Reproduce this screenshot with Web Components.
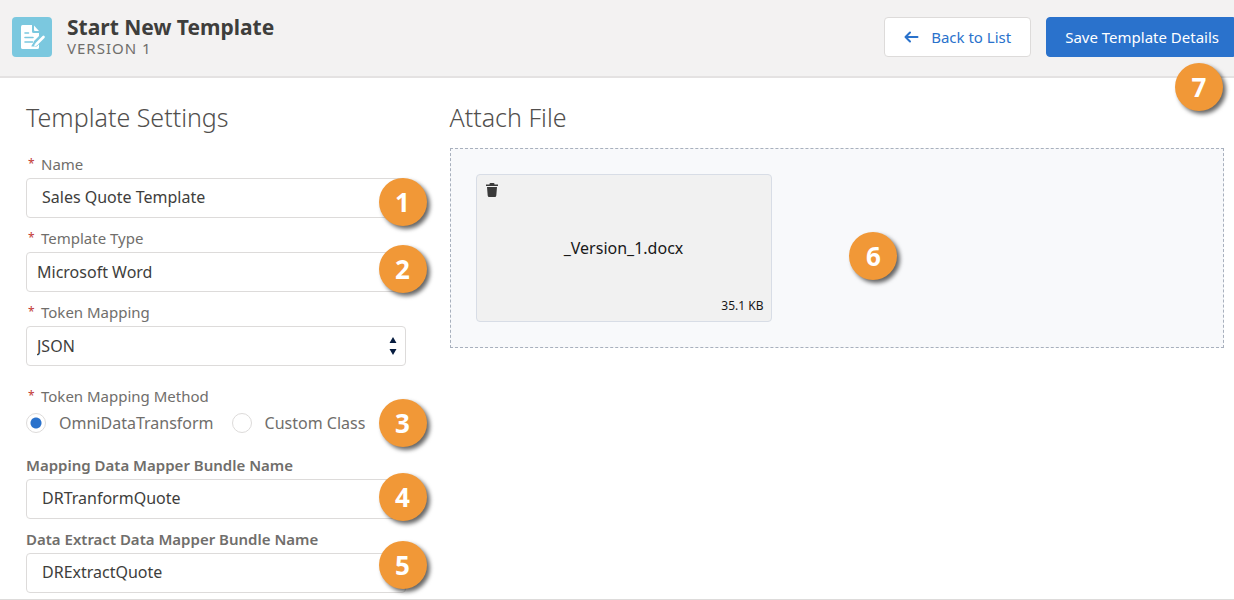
<!DOCTYPE html>
<html lang="en">
<head>
<meta charset="utf-8">
<meta name="viewport" content="width=device-width, initial-scale=1">
<title>Start New Template</title>
<style>
  body { margin: 0; background: #fff; color: #3e3e3c; font: 16px/20px "Noto Sans", "Open Sans", sans-serif; }
</style>
</head>
<body>
<template-page></template-page>

<template id="step-badge">
  <style>
    :host { position: absolute; z-index: 2; display: flex; align-items: center; justify-content: center;
      width: 48px; height: 48px; border-radius: 50%; background: #f19837; color: #fff;
      font-size: 26px; line-height: 32px; font-weight: 700; box-shadow: 3px 3px 4px rgba(0, 0, 0, .6); }
  </style>
  <slot></slot>
</template>

<template id="page-header">
  <style>
    :host { position: relative; display: flex; align-items: center; justify-content: space-between;
      padding: 16px 0 18px 12px; background: #f3f2f2; border-bottom: 2px solid #e4e2e2; }
    .title { display: flex; align-items: center; gap: 15px; }
    .icon { width: 40px; height: 40px; flex: none; }
    h1 { margin: 0; font-size: 21px; line-height: 22px; font-weight: 700; }
    p { margin: 0; font-size: 15px; line-height: 20px; color: #706e6b; letter-spacing: 1px; }
    .actions { display: flex; gap: 15px; }
    button { display: flex; align-items: center; gap: 12px; height: 40px; padding: 0 19px; box-sizing: border-box;
      border: 1px solid #dddbda; border-radius: 4px; background: #fff; color: #2a72cc; font: inherit; font-size: 15px; white-space: nowrap; }
    button.primary { background: #2a72cc; border-color: #2a72cc; color: #fff; padding: 0 14px 0 18px; border-radius: 4px 0 0 4px; }
    step-badge { right: 11px; bottom: -35px; }
  </style>
  <div class="title">
    <svg class="icon" viewBox="0 0 40 40" aria-hidden="true">
      <rect width="40" height="40" rx="4" fill="#7bc8df"/>
      <path fill="#fff" d="M10.500 8H20v6.500q0 1.500 1.500 1.500H27v3l-5 5-1 4 1 1 4-1 1-1v3q0 2-2 2H11q-2 0-2-2V10q0-2 1.500-2z"/>
      <path fill="#fff" d="M22 8.500 27 14h-4q-1 0-1-1z"/>
      <path stroke="#7bc8df" stroke-width="1.600" stroke-linecap="round" d="M13 16h3.500M13 20.500h8M13 25h7.500"/>
      <path d="m31.500 19-7.500 7.500-2 3" stroke="#7bc8df" stroke-width="5" stroke-linecap="round" fill="none"/>
      <path d="m31.500 20-7 7" stroke="#fff" stroke-width="2.600" stroke-linecap="round"/>
      <path d="m23 26.500 2 2-3 1z" fill="#fff"/>
      <path d="M9 29.500h18V30q0 2-2 2H11q-2 0-2-2z" fill="#fff"/>
    </svg>
    <div>
      <h1>Start New Template</h1>
      <p>VERSION 1</p>
    </div>
  </div>
  <div class="actions">
    <button type="button">
      <svg width="15" height="14" viewBox="0 0 15 14" fill="none" stroke="currentColor" stroke-width="2" stroke-linecap="round" stroke-linejoin="round" aria-hidden="true"><path d="M6 2.500 1.500 7 6 11.500M2 7h11.500"/></svg>
      Back to List
    </button>
    <button type="button" class="primary">Save Template Details</button>
  </div>
  <step-badge>7</step-badge>
</template>

<template id="text-field">
  <style>
    :host { position: relative; display: flex; flex-direction: column; gap: 4px; }
    label { display: flex; font-size: 15px; line-height: 20px; color: #706e6b; }
    :host(:not([required])) label { font-weight: 600; }
    .star { width: 15px; box-sizing: border-box; padding-left: 2px; font-size: 12px; color: #c23934; }
    :host(:not([required])) .star { display: none; }
    .box { position: relative; display: flex; align-items: center; }
    input, select { width: 100%; height: 40px; box-sizing: border-box; margin: 0; padding: 0 15px 2px; appearance: none;
      border: 1px solid #dddbda; border-radius: 4px; background: #fff; color: #3e3e3c; font: inherit; }
    select { padding: 0 10px; }
    .arrows { position: absolute; right: 9px; pointer-events: none; }
    ::slotted(step-badge) { right: -21px; bottom: calc(-8px + var(--rise, 0px)); }
  </style>
  <label for="control"><span class="star" aria-hidden="true">*</span><span class="text"></span></label>
  <div class="box"></div>
  <slot></slot>
</template>

<template id="radio-choice">
  <style>
    :host { position: relative; display: block; margin: 10px 0 12px; }
    fieldset { margin: 0; padding: 0; border: 0; }
    legend { display: flex; padding: 0; margin-bottom: 7px; font-size: 15px; color: #706e6b; }
    .star { width: 15px; box-sizing: border-box; padding-left: 2px; font-size: 12px; color: #c23934; }
    .options { display: flex; gap: 18px; }
    label { display: flex; align-items: center; gap: 13px; color: #706e6b; white-space: nowrap; }
    input { appearance: none; width: 20px; height: 20px; box-sizing: border-box; margin: 0; border: 1px solid #dddbda;
      border-radius: 50%; background: #fff; }
    input:checked { background: radial-gradient(circle, #2a72cc 5px, #fff 6px); }
    step-badge { right: -21px; bottom: -14px; }
  </style>
  <fieldset>
    <legend><span class="star" aria-hidden="true">*</span>Token Mapping Method</legend>
    <div class="options">
      <label><input type="radio" name="method" checked>OmniDataTransform</label>
      <label><input type="radio" name="method">Custom Class</label>
    </div>
  </fieldset>
  <step-badge>3</step-badge>
</template>

<template id="file-card">
  <style>
    :host { display: grid; grid-template-rows: 20px 1fr 20px; width: 296px; height: 148px; box-sizing: border-box;
      padding: 5px 7px; border: 1px solid #d8dde6; border-radius: 4px; background: #f1f1f1; color: #181818; }
    button { justify-self: start; width: 16px; height: 20px; padding: 0; border: 0; background: none; color: #3a3a3a; }
    svg { display: block; margin: 0 auto; }
    .name { place-self: center; }
    .size { justify-self: end; font-size: 12px; line-height: 20px; }
  </style>
  <button type="button" aria-label="Remove file">
    <svg width="14" height="16" viewBox="0 0 14 16" fill="currentColor" aria-hidden="true"><path d="M1 2.500h3.500V2q0-1 1-1h3q1 0 1 1v.5H13V4H1z"/><path d="M2 5h10l-.7 8.500q-.1 1.500-1.500 1.500H4.200q-1.400 0-1.500-1.500z"/></svg>
  </button>
  <span class="name"><slot></slot></span>
  <span class="size"><slot name="size"></slot></span>
</template>

<template id="template-page">
  <style>
    :host { display: block; }
    main { display: grid; grid-template-columns: minmax(0, 49fr) minmax(0, 100fr); column-gap: 44px;
      padding: 19px 10px 6px 26px; border-bottom: 1px solid #dddbda; }
    h2 { margin: 0; font-size: 25px; line-height: 40px; font-weight: 300; color: #514f4d; }
    form { display: flex; flex-direction: column; gap: 10px; margin-top: 17px; }
    .drop { position: relative; margin-top: 11px; padding: 25px; border: 1px dashed #a8b0bd; background: #f8f9fb; }
    .drop step-badge { left: calc(55% - 26px); top: 83px; }
  </style>
  <page-header></page-header>
  <main>
    <section>
      <h2>Template Settings</h2>
      <form>
        <text-field label="Name" value="Sales Quote Template" required><step-badge>1</step-badge></text-field>
        <text-field label="Template Type" value="Microsoft Word" kind="select" required style="--rise: 7px"><step-badge>2</step-badge></text-field>
        <text-field label="Token Mapping" value="JSON" kind="select" required></text-field>
        <radio-choice></radio-choice>
        <text-field label="Mapping Data Mapper Bundle Name" value="DRTranformQuote" style="--rise: 6px"><step-badge>4</step-badge></text-field>
        <text-field label="Data Extract Data Mapper Bundle Name" value="DRExtractQuote" style="--rise: 12px"><step-badge>5</step-badge></text-field>
      </form>
    </section>
    <section>
      <h2>Attach File</h2>
      <div class="drop">
        <file-card>_Version_1.docx<span slot="size">35.1 KB</span></file-card>
        <step-badge>6</step-badge>
      </div>
    </section>
  </main>
</template>

<script>
  class Base extends HTMLElement {
    constructor() {
      super();
      const source = document.getElementById(this.localName);
      this.attachShadow({ mode: "open" }).append(source.content.cloneNode(true));
    }
  }

  class TextField extends Base {
    connectedCallback() {
      const root = this.shadowRoot;
      const box = root.querySelector(".box");
      const value = this.getAttribute("value");
      root.querySelector(".text").textContent = this.getAttribute("label");
      let control;
      if (this.getAttribute("kind") === "select") {
        control = document.createElement("select");
        control.add(new Option(value, value, true, true));
        box.innerHTML = '<svg class="arrows" width="8" height="20" viewBox="0 0 8 20" fill="#061c3f" aria-hidden="true"><path d="M4 1l3.500 6h-7zM4 19l3.500-6h-7z"/></svg>';
      } else {
        control = document.createElement("input");
        control.type = "text";
        control.value = value;
      }
      control.id = "control";
      control.required = this.hasAttribute("required");
      box.prepend(control);
    }
  }

  customElements.define("step-badge", class extends Base {});
  customElements.define("page-header", class extends Base {});
  customElements.define("text-field", TextField);
  customElements.define("radio-choice", class extends Base {});
  customElements.define("file-card", class extends Base {});
  customElements.define("template-page", class extends Base {});
</script>
</body>
</html>
